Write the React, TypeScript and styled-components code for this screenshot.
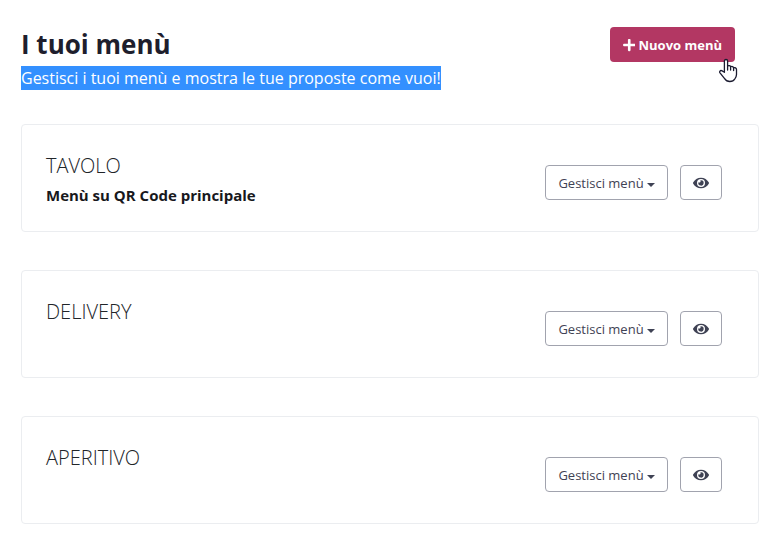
import React from "react";
import styled, { createGlobalStyle } from "styled-components";
import { FaPlus, FaEye } from "react-icons/fa";

const GlobalStyle = createGlobalStyle`
  *, *::before, *::after { box-sizing: border-box; }
  body {
    margin: 0;
    background: #fff;
    color: #212529;
    font-family: "Segoe UI", "Open Sans", "Noto Sans", sans-serif;
    font-size: 15px;
    line-height: 24px;
  }
`;

const Page = styled.main`
  padding: 26px 16px 22px 21px;
`;

const Header = styled.header`
  display: flex;
  align-items: flex-start;
  justify-content: space-between;
  padding-right: 24px;
  margin-bottom: 34px;
`;

const Title = styled.h1`
  margin: 0 0 4px;
  color: #1e1e2d;
  font-size: 26px;
  font-weight: 700;
  line-height: 36px;
`;

const Subtitle = styled.p`
  margin: 0;
  font-size: 16px;
  white-space: nowrap;
`;

const Highlight = styled.mark`
  display: block;
  background: #3390ff;
  color: #fff;
  font-weight: 500;
`;

const BaseButton = styled.button`
  display: inline-flex;
  align-items: center;
  justify-content: center;
  height: 35px;
  padding: 0 12px;
  border: 1px solid transparent;
  border-radius: 4px;
  font: inherit;
  font-size: 13px;
  white-space: nowrap;
  cursor: pointer;
`;

const PrimaryWrap = styled.div`
  position: relative;
  margin-top: 1px;
`;

const PrimaryButton = styled(BaseButton)`
  gap: 3px;
  width: 125px;
  background: #b33763;
  color: #fff;
  font-weight: 700;
`;

const Pointer = styled.svg`
  position: absolute;
  top: 31px;
  right: -3px;
  pointer-events: none;
`;

const CardList = styled.ul`
  display: grid;
  gap: 38px;
  margin: 0;
  padding: 0;
  list-style: none;
`;

const Card = styled.li`
  display: flex;
  align-items: flex-start;
  justify-content: space-between;
  min-height: 108px;
  padding: 24px 36px 24px 24px;
  border: 1px solid #ebedf0;
  border-radius: 4px;
`;

const CardTitle = styled.h2`
  margin: 0;
  color: #212529;
  font-size: 20px;
  font-weight: 300;
  line-height: 34px;
`;

const CardNote = styled.p`
  margin: 0;
  color: #18181c;
  font-size: 15px;
  font-weight: 700;
`;

const Actions = styled.div`
  display: flex;
  gap: 12px;
  margin-top: 16px;
`;

const OutlineButton = styled(BaseButton)`
  border-color: #a1a3ae;
  background: #fff;
  color: #3f4254;
`;

const MenuButton = styled(OutlineButton)`
  gap: 3px;
  width: 123px;
`;

const Caret = styled.span`
  margin-top: 4px;
  border-top: 4px solid currentColor;
  border-right: 4px solid transparent;
  border-left: 4px solid transparent;
`;

const ViewButton = styled(OutlineButton)`
  width: 42px;
`;

const menus = [
  { name: "TAVOLO", note: "Menù su QR Code principale" },
  { name: "DELIVERY" },
  { name: "APERITIVO" },
];

function HandPointer() {
  return (
    <Pointer width="19" height="25" viewBox="0 0 19 25" aria-hidden="true">
      <path
        d="M7 1.5C8.2 1.5 8.6 2.3 8.6 3.2V8C9.6 7.2 11.4 7.5 11.6 8.8C12.8 8.1 14.4 8.5 14.6 9.8C16 9.2 17.5 10 17.5 11.5V16.5C17.5 18.5 16.5 20 15.8 21C14.8 22.8 13 23.5 10.8 23.5C8.2 23.5 6.6 22.2 5.4 20.3L1 14.8C.2 13.6 1.2 12.1 2.7 12.6L5.4 14.3V3.2C5.4 2.3 5.9 1.5 7 1.5Z"
        fill="#fff"
        stroke="#1b1b30"
        strokeWidth="1.3"
        strokeLinejoin="round"
      />
      <path
        d="M8.6 7.5V12M11.6 8.5V12M14.6 9.5V12.5"
        fill="none"
        stroke="#1b1b30"
        strokeWidth="1.3"
        strokeLinecap="round"
      />
    </Pointer>
  );
}

export default function App() {
  return (
    <>
      <GlobalStyle />
      <Page>
        <Header>
          <div>
            <Title>I tuoi menù</Title>
            <Subtitle>
              <Highlight>Gestisci i tuoi menù e mostra le tue proposte come vuoi!</Highlight>
            </Subtitle>
          </div>
          <PrimaryWrap>
            <PrimaryButton type="button">
              <FaPlus size={14} aria-hidden="true" />
              Nuovo menù
            </PrimaryButton>
            <HandPointer />
          </PrimaryWrap>
        </Header>
        <CardList>
          {menus.map((menu) => (
            <Card key={menu.name}>
              <div>
                <CardTitle>{menu.name}</CardTitle>
                {menu.note && <CardNote>{menu.note}</CardNote>}
              </div>
              <Actions>
                <MenuButton type="button" aria-haspopup="menu">
                  Gestisci menù
                  <Caret aria-hidden="true" />
                </MenuButton>
                <ViewButton type="button" aria-label={`Visualizza ${menu.name}`}>
                  <FaEye size={16} aria-hidden="true" />
                </ViewButton>
              </Actions>
            </Card>
          ))}
        </CardList>
      </Page>
    </>
  );
}
